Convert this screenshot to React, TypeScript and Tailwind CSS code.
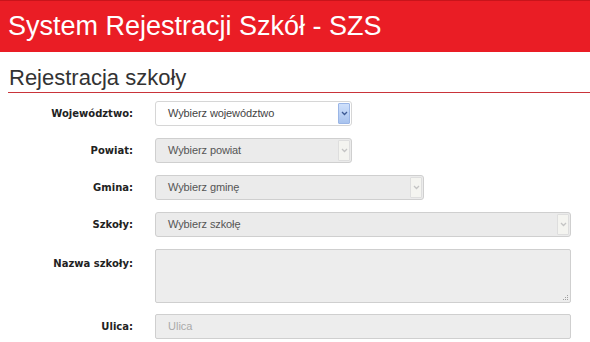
import React from 'react';

const labelCls =
  "w-[133px] shrink-0 text-right text-[10px] font-bold text-[#222] [font-family:'DejaVu_Sans',sans-serif]";

interface SelectBoxProps {
  text: string;
  width: string;
  active?: boolean;
}

const Chevron: React.FC<{ color: string }> = ({ color }) => (
  <svg width="7" height="5" viewBox="0 0 7 5">
    <path d="M1 1 L3.5 3.5 L6 1" fill="none" stroke={color} strokeWidth="1.3" />
  </svg>
);

const SelectBox: React.FC<SelectBoxProps> = ({ text, width, active }) => (
  <div
    className={`${width} h-[25px] flex items-stretch rounded-[3px] border ${
      active ? 'bg-white border-[#d6d6d6]' : 'bg-[#ebebeb] border-[#cfcfcf]'
    }`}
  >
    <div
      className={`flex-1 flex items-center pl-[12px] text-[11px] tracking-[-0.1px] [font-family:'Liberation_Sans',Arial,sans-serif] ${
        active ? 'text-[#444]' : 'text-[#555]'
      }`}
    >
      {text}
    </div>
    {active ? (
      <div className="w-[12px] my-[1px] mr-[1px] flex items-center justify-center bg-gradient-to-b from-[#cfe0fb] to-[#a8c3ee] border border-[#9bb6e6] rounded-[1px]">
        <Chevron color="#3d5a94" />
      </div>
    ) : (
      <div className="w-[12px] my-[1px] mr-[1px] flex items-center justify-center bg-[#f4f4f0] border border-[#dedede] rounded-[1px]">
        <Chevron color="#c4c4c4" />
      </div>
    )}
  </div>
);

export default function App() {
  return (
    <div className="w-[590px] h-[342px] bg-white overflow-hidden [font-family:'Liberation_Sans',Arial,sans-serif]">
      {/* Header bar */}
      <div className="h-[52px] bg-[#ea1d25] border-t border-[#c8141b] flex items-center pl-[8px]">
        <h1 className="text-white text-[27px] leading-none pb-[1px]">System Rejestracji Szkół - SZS</h1>
      </div>

      {/* Section title */}
      <div className="ml-[8px] h-[41px] border-b border-[#c9343a] flex items-end pb-[3px]">
        <h2 className="text-[22px] leading-none text-[#333] pl-[1px]">Rejestracja szkoły</h2>
      </div>

      {/* Form */}
      <div className="flex flex-col gap-[12px] mt-[8px]">
        <div className="flex items-center gap-[22px]">
          <span className={labelCls}>Województwo:</span>
          <SelectBox text="Wybierz województwo" width="w-[197px]" active />
        </div>
        <div className="flex items-center gap-[22px]">
          <span className={labelCls}>Powiat:</span>
          <SelectBox text="Wybierz powiat" width="w-[197px]" />
        </div>
        <div className="flex items-center gap-[22px]">
          <span className={labelCls}>Gmina:</span>
          <SelectBox text="Wybierz gminę" width="w-[269px]" />
        </div>
        <div className="flex items-center gap-[22px]">
          <span className={labelCls}>Szkoły:</span>
          <SelectBox text="Wybierz szkołę" width="w-[416px]" />
        </div>
        <div className="flex items-start gap-[22px]">
          <span className={`${labelCls} pt-[7px]`}>Nazwa szkoły:</span>
          <div className="relative w-[416px] h-[54px] bg-[#ededed] border border-[#cfcfcf] rounded-[2px]">
            <svg className="absolute right-[1px] bottom-[1px]" width="8" height="8" viewBox="0 0 8 8">
              <g fill="#a0a0a0">
                <rect x="6" y="2" width="1" height="1" />
                <rect x="4" y="4" width="1" height="1" />
                <rect x="6" y="4" width="1" height="1" />
                <rect x="2" y="6" width="1" height="1" />
                <rect x="4" y="6" width="1" height="1" />
                <rect x="6" y="6" width="1" height="1" />
              </g>
            </svg>
          </div>
        </div>
        <div className="flex items-center gap-[22px] -mt-[1px]">
          <span className={labelCls}>Ulica:</span>
          <div className="w-[416px] h-[25px] bg-[#ededed] border border-[#cfcfcf] rounded-[2px] flex items-center pl-[12px] text-[11px] text-[#aaa]">
            Ulica
          </div>
        </div>
      </div>
    </div>
  );
}
